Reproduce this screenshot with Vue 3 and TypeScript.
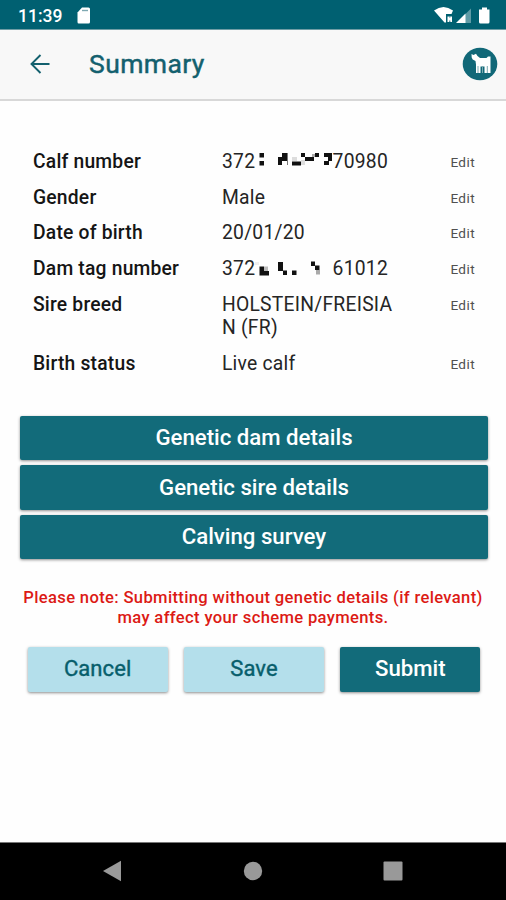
<script setup lang="ts">
interface Block { x: number; y: number; w: number; h: number; c: string }
interface Row { label: string; value: string; tail?: string; blocks?: Block[] }

const b = (x: number, y: number, w: number, h: number, c = '#111'): Block => ({ x, y, w, h, c })

const rows: Row[] = [
  {
    label: 'Calf number',
    value: '372',
    tail: '70980',
    blocks: [
      b(4.5, 4, 4.5, 4.5), b(4.5, 12, 4.5, 4.5), b(23, 8, 4, 8), b(27, 4, 5, 8), b(32, 4, 1, 12, '#777'),
      b(37, 8, 5, 4, '#ddd'), b(37, 12.5, 9, 4), b(46, 4, 4, 4), b(46, 11, 4, 5, '#ddd'),
      b(50, 8, 9, 4), b(57, 5, 3, 3, '#aaa'), b(60, 4, 4, 4), b(69, 4, 8, 4), b(73, 8, 4, 4), b(69, 12, 5, 4),
    ],
  },
  { label: 'Gender', value: 'Male' },
  { label: 'Date of birth', value: '20/01/20' },
  {
    label: 'Dam tag number',
    value: '372',
    tail: '61012',
    blocks: [
      b(0, 6, 4, 3, '#eee'), b(4.5, 10.5, 4.5, 9), b(9, 15, 5, 4.5), b(9, 10.5, 4, 4.5, '#bbb'),
      b(23, 6, 5, 9), b(28, 14.5, 4, 4.5), b(37, 14.5, 4.5, 4.5), b(56, 5.5, 4, 4.5), b(60, 9.5, 4.5, 4.5), b(61, 14, 4, 4.5, '#aaa'),
    ],
  },
  { label: 'Sire breed', value: 'HOLSTEIN/FREISIAN (FR)' },
  { label: 'Birth status', value: 'Live calf' },
]

const sections: string[] = ['Genetic dam details', 'Genetic sire details', 'Calving survey']
</script>

<template>
  <div class="screen">
    <div class="status">
      <span class="clock">11:39</span>
      <svg class="sd" width="14" height="17" viewBox="0 0 14 17">
        <path fill="#fff" d="M5 .5h6.500Q13 .5 13 2v13q0 1.500-1.500 1.500H1.700Q.5 16.500.5 15V5.500z" />
        <path stroke="#7fa9b2" stroke-width="1.4" d="M5 3.500h6" />
      </svg>
      <svg class="signals" width="60" height="20" viewBox="0 0 60 20">
        <path fill="#fff" d="M0 5.500Q9.500-1.500 19 5.500l-1.500 3.500h-5.500v8.500h-1.500z" />
        <path fill="#fff" d="M13.500 11.500h4.500v5.500h-4.500z" />
        <path fill="#5f9ba6" d="M15 11h1.500v1.500H15zM15 15.500h1.500V17H15z" />
        <path fill="#5f9ba6" d="M37 3.500V18h-6V9.500z" />
        <path fill="#fff" d="M31.500 8.500V18H22z" />
        <path fill="#fff" d="M48 2.500h5v2h2.500V17q0 1.500-1.500 1.500h-7.500Q45 18.500 45 17V4.500h3z" />
      </svg>
    </div>
    <header class="bar">
      <svg class="back" width="20" height="20" viewBox="0 0 20 20">
        <path d="M19.500 10H1.500M10.500 1L1.500 10 10.500 19" fill="none" stroke="#13606e" stroke-width="1.900" />
      </svg>
      <h1>Summary</h1>
      <svg class="animal" width="36" height="34" viewBox="0 0 36 34">
        <ellipse cx="18" cy="17" rx="17.300" ry="16.300" fill="#116878" />
        <path fill="#fff" d="M9.500 7l2 1 2.500-1.200L15.500 9l2.500 2h6.500l1.500-1.500h2.500v16.500h-14.500v-8.500l-.5-3.500-2.800-1.500-1-2z" />
        <path fill="#116878" d="M18.500 19.500h4V27h-4z" />
        <path stroke="#7ba9b1" stroke-width="1" d="M16 19v7M25.300 19v7M20.500 19v7" />
      </svg>
    </header>
    <main>
      <dl class="rows">
        <div v-for="row in rows" :key="row.label" class="row">
          <dt>{{ row.label }}</dt>
          <dd>
            <template v-if="row.blocks">
              <span class="pair">
                <span>{{ row.value }}</span>
                <svg class="mask" viewBox="0 0 78 20">
                  <rect v-for="(k, i) in row.blocks" :key="i" :x="k.x" :y="k.y" :width="k.w" :height="k.h" :fill="k.c" />
                </svg>
                <span>{{ row.tail }}</span>
              </span>
            </template>
            <template v-else>{{ row.value }}</template>
          </dd>
          <span class="edit">Edit</span>
        </div>
      </dl>
      <div class="sections">
        <button v-for="s in sections" :key="s" class="btn dark">{{ s }}</button>
      </div>
      <p class="note">Please note: Submitting without genetic details (if relevant)<br />may affect your scheme payments.</p>
      <div class="actions">
        <button class="btn light">Cancel</button>
        <button class="btn light">Save</button>
        <button class="btn dark">Submit</button>
      </div>
    </main>
    <nav class="nav">
      <svg width="20" height="22" viewBox="0 0 20 22"><path d="M1 11L19 .7v20.600z" fill="#999" /></svg>
      <svg width="20" height="20" viewBox="0 0 20 20"><circle cx="10" cy="10" r="9.200" fill="#999" /></svg>
      <svg width="20" height="20" viewBox="0 0 20 20"><rect x=".5" y=".5" width="19" height="19" rx="1" fill="#999" /></svg>
    </nav>
  </div>
</template>

<style>
body { margin: 0; background: #fff; }
</style>

<style scoped>
.screen {
  width: 506px;
  height: 900px;
  display: flex;
  flex-direction: column;
  overflow: hidden;
  background: #fefefe;
  font-family: Roboto, sans-serif;
}
.status {
  height: 30px;
  flex: none;
  box-sizing: border-box;
  display: flex;
  align-items: center;
  padding: 1px 12.5px 0 18px;
  background: #006071;
  border-bottom: 1px solid #6f9da5;
}
.clock { width: 59px; color: #fff; font-size: 17.5px; font-weight: 500; line-height: 28px; padding-top: 1px; }
.signals { margin-left: auto; }
.bar {
  height: 71px;
  flex: none;
  box-sizing: border-box;
  display: flex;
  align-items: center;
  padding: 0 8px 1px 30px;
  background: #f8f8f8;
  border-bottom: 2px solid #d8d8d8;
}
h1 {
  margin: 0 0 0 39px;
  color: #13606e;
  font-size: 26.5px;
  font-weight: 400;
  -webkit-text-stroke: 0.45px #13606e;
  line-height: 32px;
  letter-spacing: 0.4px;
}
.animal { margin-left: auto; }
main { flex: 1; padding-top: 49px; }
.rows { margin: 0; padding: 0 31px 0 33px; display: grid; gap: 12.2px; }
.row { display: grid; grid-template-columns: 189px 172px 1fr; line-height: 23.5px; }
dt { color: #151515; font-size: 19.3px; font-weight: 500; letter-spacing: 0.2px; white-space: nowrap; }
dd { margin: 0; color: #252525; font-size: 19.3px; letter-spacing: 0.24px; word-break: break-all; }
.pair { display: flex; width: 166px; justify-content: space-between; height: 23.5px; }
.mask { width: 78px; height: 20px; flex: none; margin: -1px -1px 0; }
.edit { color: #505050; font-size: 13.6px; letter-spacing: 0.4px; line-height: 24.5px; height: 23.5px; text-align: right; }
.sections { display: grid; gap: 5px; padding: 0 18px 0 20px; margin-top: 40.7px; }
.btn {
  height: 44.3px;
  padding: 0 0 2px;
  border: 0;
  border-radius: 2px;
  font-family: inherit;
  font-size: 22.2px;
  font-weight: 500;
  box-shadow: 0 1px 3px rgba(0, 0, 0, 0.45);
}
.dark { background: #126b7a; color: #fff; }
.light {
  background: #b4dfeb;
  color: #075e6b;
  font-size: 22px;
  font-weight: 400;
  letter-spacing: 0.1px;
  -webkit-text-stroke: 0.4px #075e6b;
}
.note {
  margin: 29.3px 0 0;
  text-align: center;
  color: #dc1a15;
  font-size: 16.6px;
  font-weight: 500;
  line-height: 19.5px;
  letter-spacing: 0.34px;
}
.actions {
  display: grid;
  grid-template-columns: repeat(3, 1fr);
  gap: 16px;
  padding: 0 25.5px 0 27.5px;
  margin-top: 20px;
}
.nav {
  height: 58px;
  flex: none;
  box-sizing: border-box;
  display: flex;
  align-items: center;
  justify-content: space-between;
  padding: 0 103px 2px 102px;
  background: #000;
  border-top: 1px solid #777;
}
</style>
